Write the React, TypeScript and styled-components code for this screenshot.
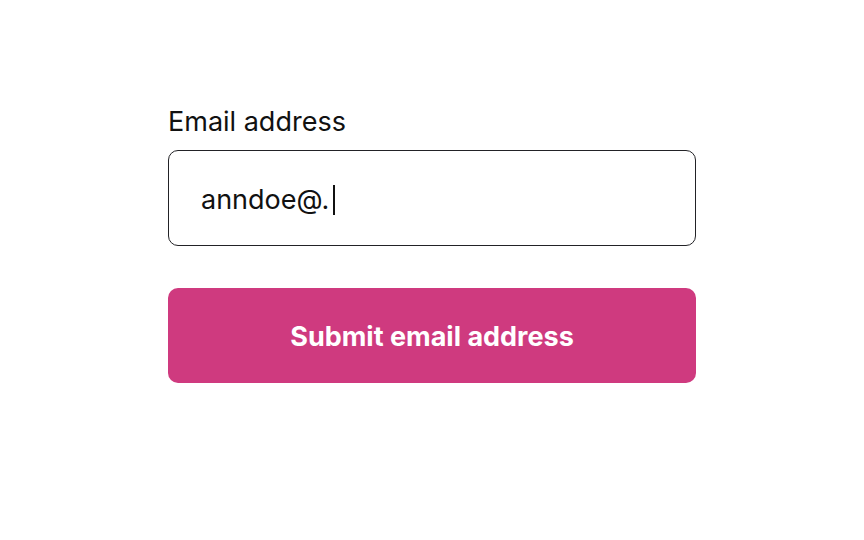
import React from 'react';
import styled, { createGlobalStyle } from 'styled-components';

const GlobalStyle = createGlobalStyle`
  html, body {
    margin: 0;
    padding: 0;
    background: #ffffff;
  }
  body {
    font-family: Inter, "Noto Sans", sans-serif;
    color: #111111;
  }
`;

const Page = styled.div`
  width: 864px;
  height: 540px;
  display: flex;
  justify-content: center;
  padding-top: 106px;
  box-sizing: border-box;
`;

const Form = styled.form`
  width: 528px;
  display: flex;
  flex-direction: column;
`;

const Label = styled.label`
  font-size: 27px;
  line-height: 32px;
  margin-bottom: 12px;
  color: #111111;
`;

const Field = styled.div`
  height: 96px;
  box-sizing: border-box;
  border: 1.6px solid #222226;
  border-radius: 10px;
  padding: 3px 32px 0;
  display: flex;
  align-items: center;
  font-size: 27px;
  color: #111111;
`;

const Caret = styled.span`
  display: inline-block;
  width: 1.5px;
  height: 30px;
  margin-left: 4px;
  background: #111111;
`;

const SubmitButton = styled.button`
  margin-top: 42px;
  height: 95px;
  padding-top: 2px;
  border: none;
  border-radius: 10px;
  background: #cf3a7f;
  color: #ffffff;
  font-family: Inter, "Noto Sans", sans-serif;
  font-size: 27px;
  font-weight: 700;
  cursor: pointer;
`;

const App = () => {
  return (
    <>
      <GlobalStyle />
      <Page>
        <Form onSubmit={(e) => e.preventDefault()}>
          <Label>Email address</Label>
          <Field>
            anndoe@.
            <Caret />
          </Field>
          <SubmitButton type="submit">Submit email address</SubmitButton>
        </Form>
      </Page>
    </>
  );
};

export default App;
